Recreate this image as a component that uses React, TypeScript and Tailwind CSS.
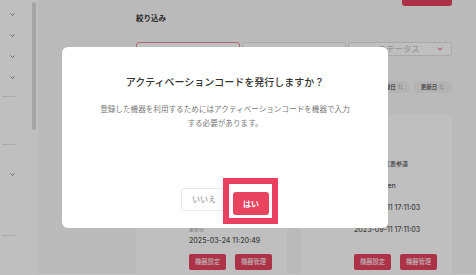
import React from "react";

const Chevron = () => (
  <svg width="5" height="3" viewBox="0 0 5 3">
    <path d="M0.5 0.5 L2.5 2.5 L4.5 0.5" stroke="currentColor" fill="none" strokeWidth="0.9" />
  </svg>
);

const SortIcon = () => (
  <svg width="5" height="6" viewBox="0 0 5 6" className="text-[#aaa]">
    <path d="M1.3 5.5 V0.7 M0.3 1.7 L1.3 0.7 L2.3 1.7" stroke="currentColor" fill="none" strokeWidth="0.6" />
    <path d="M3.7 0.5 V5.3 M2.7 4.3 L3.7 5.3 L4.7 4.3" stroke="currentColor" fill="none" strokeWidth="0.6" />
  </svg>
);

type Pair = { label: string; value: React.ReactNode; jp?: boolean };

const Card = ({ title, pairs }: { title: string; pairs: Pair[] }) => (
  <div className="flex rounded-[5px] bg-white pl-[13px] pr-[10px] pt-[12px] pb-[10px] gap-[8px]">
    <div className="w-[32px] h-[32px] shrink-0 rounded-[3px] bg-[#f0f0f0] mt-[4px]" />
    <div className="flex flex-col flex-1">
      <div className="text-[8px] leading-[16px] font-bold text-[#333] mb-[5px]">{title}</div>
      {pairs.map((p, i) => (
        <div key={i} className="flex flex-col">
          <span className="text-[5px] leading-[11px] text-[#9a9a9a]">{p.label}</span>
          <span
            className={
              p.jp
                ? "text-[6px] leading-[11px] font-medium text-[#555]"
                : "text-[7px] leading-[11px] font-medium text-[#555]"
            }
          >
            {p.value}
          </span>
        </div>
      ))}
      <div className="mt-auto pt-[8px] flex gap-[9px]">
        <button className="h-[16px] w-[37px] rounded-[2px] bg-[#e8435f] text-white text-[6.3px] leading-none">機器設定</button>
        <button className="h-[16px] w-[37px] rounded-[2px] bg-[#e8435f] text-white text-[6.3px] leading-none">機器管理</button>
      </div>
    </div>
  </div>
);

export default function App() {
  return (
    <div className="relative w-[476px] h-[275px] overflow-hidden bg-white font-['Inter','Noto_Sans_CJK_JP',sans-serif]">
      <div className="flex h-[273px] overflow-hidden">
        <aside className="flex w-[38px] shrink-0 bg-white">
          <nav className="w-[30px] flex flex-col pt-[4px]">
            {[0, 1, 2, 3].map((i) => (
              <div key={i} className="h-[21px] flex items-center pl-[10px] text-[#7a7a7a]">
                <Chevron />
              </div>
            ))}
            <div className="h-[8px]" />
            <div className="ml-[2px] w-[14px] h-px bg-[#e4e4e4]" />
            <div className="h-[47px]" />
            <div className="ml-[2px] w-[14px] h-px bg-[#e4e4e4]" />
            <div className="mt-[19px] h-[21px] flex items-center pl-[10px] text-[#7a7a7a]">
              <Chevron />
            </div>
            <div className="h-[50px]" />
            <div className="ml-[2px] w-[14px] h-px bg-[#e4e4e4]" />
          </nav>
          <div className="w-[4px] ml-[2px] pt-[2px]">
            <div className="h-[128px] rounded-full bg-[#dcdcdc]" />
          </div>
        </aside>

        <main className="flex-1 bg-[#f8f8f8] pl-[98px] pr-[24px] flex flex-col">
          <div className="flex justify-end">
            <button className="-mt-[14px] h-[20px] w-[50px] rounded-[3px] bg-[#e8435f]" />
          </div>
          <div className="mt-[7px] text-[7.5px] leading-[12px] font-bold text-[#333]">絞り込み</div>
          <div className="mt-[17px] grid grid-cols-3 gap-[2px] h-[21px]">
            <div className="rounded-[3px] border border-[#ee8a9a] bg-white" />
            <div className="rounded-[3px] border border-[#e2e2e2] bg-white" />
            <div className="rounded-[3px] border border-[#e2e2e2] bg-white flex items-center pl-[29px] pr-[8px]">
              <span className="flex-1 text-[8.3px] text-[#c4c4c4]">ステータス</span>
              <svg width="6" height="4" viewBox="0 0 6 4" className="text-[#e8435f]">
                <path d="M0.7 0.7 L3 3 L5.3 0.7" stroke="currentColor" fill="none" strokeWidth="1" />
              </svg>
            </div>
          </div>
          <div className="mt-[25px] flex justify-end gap-[3px]">
            <div className="h-[12px] w-[38px] rounded-full bg-[#efefef] flex items-center justify-center gap-[2px] text-[5.5px] font-bold text-[#666]">
              登録日 <SortIcon />
            </div>
            <div className="h-[12px] w-[39px] rounded-full bg-[#efefef] flex items-center justify-center gap-[2px] text-[5.5px] font-bold text-[#666]">
              更新日 <SortIcon />
            </div>
          </div>
          <div className="mt-[7px] h-px bg-[#e4e4e4]" />
          <div className="mt-[14px] grid grid-cols-2 gap-[14px] items-stretch">
            <Card
              title="端末B"
              pairs={[
                { label: "設置場所", value: <>東京都港区<br />南青山</>, jp: true },
                { label: "画面", value: "Entrance" },
                { label: "登録日", value: "2025-03-24 11:20:49" },
                { label: "更新日", value: "2025-03-24 11:20:49" },
              ]}
            />
            <Card
              title="端末A"
              pairs={[
                { label: "設置場所", value: "東京都渋谷区表参道", jp: true },
                { label: "画面", value: "Main Screen" },
                { label: "登録日", value: "2023-09-11 17:11:03" },
                { label: "更新日", value: "2023-09-11 17:11:03" },
              ]}
            />
          </div>
        </main>
      </div>

      <div className="absolute inset-0 bg-black/25 flex items-center justify-center pr-[26px]">
        <div className="w-[326px] h-[181px] bg-white rounded-[6px] flex flex-col items-center pt-[28px] pb-[13px] font-['Noto_Sans_CJK_JP',sans-serif]">
          <h2 className="text-[10px] leading-[14px] font-medium text-[#333]">
            アクティベーションコードを発行しますか？
          </h2>
          <p className="mt-[13px] text-[7.6px] leading-[14px] text-[#777] text-center whitespace-nowrap">
            登録した機器を利用するためにはアクティベーションコードを機器で入力
            <br />
            する必要があります。
          </p>
          <div className="mt-auto flex gap-[6px]">
            <button className="h-[23px] px-[10px] rounded-[3px] border border-[#e8e8e8] bg-white text-[8px] text-[#888]">
              いいえ
            </button>
            <div className="relative">
              <button className="h-[23px] w-[36px] rounded-[3px] bg-[#e8435f] text-white text-[8px] font-bold">
                はい
              </button>
              <span className="pointer-events-none absolute -left-[10px] -right-[9px] -top-[10px] -bottom-[9px] border-[6px] border-[#e8405e]" />
            </div>
          </div>
        </div>
      </div>
    </div>
  );
}
